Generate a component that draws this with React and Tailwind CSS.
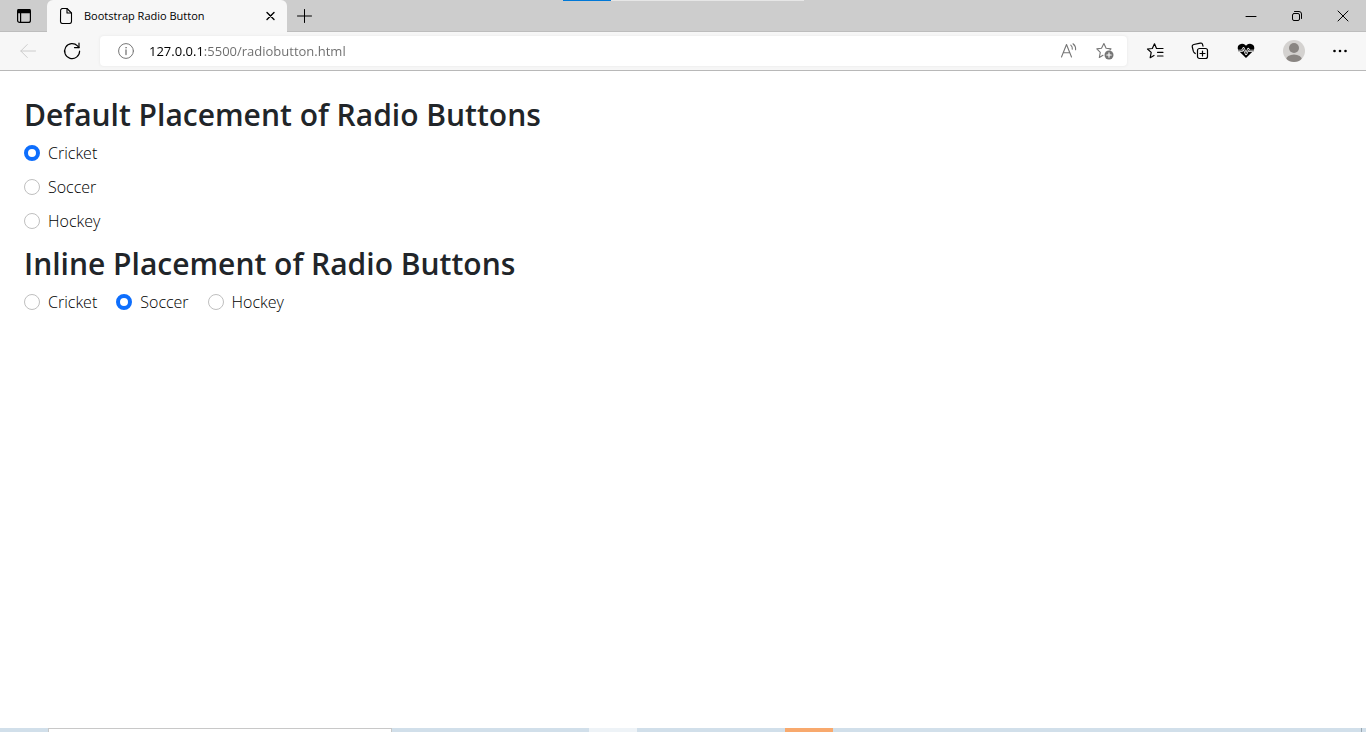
import React from "react";

function Icon({ size = 16, width = 1, className = "", children }) {
  return (
    <svg
      width={size}
      height={size}
      viewBox={`0 0 ${size} ${size}`}
      fill="none"
      stroke="currentColor"
      strokeWidth={width}
      strokeLinecap="round"
      strokeLinejoin="round"
      className={className}
      aria-hidden="true"
    >
      {children}
    </svg>
  );
}

function IconButton({ label, className = "", children, ...rest }) {
  return (
    <button type="button" aria-label={label} className={`flex shrink-0 items-center justify-center ${className}`} {...rest}>
      {children}
    </button>
  );
}

function TabStrip() {
  return (
    <header className="relative flex h-8 items-stretch bg-[#cdcdcd] text-black">
      <div className="absolute top-0 left-[563px] flex h-px w-[241px] bg-[#e6e6e6]">
        <div className="w-12 bg-[#0078d7]" />
      </div>
      <IconButton label="Tab actions" className="w-[47px] border-b border-[#bdbdbd]">
        <Icon size={16} width={1.2}>
          <rect x="1.6" y="1.6" width="12.8" height="12.8" rx="2" />
          <path d="M2 1.6h12v3H2z" fill="currentColor" />
          <path d="M4.6 5v9" />
        </Icon>
      </IconButton>
      <div className="flex w-60 items-center rounded-t-md bg-[#f7f7f7] pr-2 pl-3">
        <Icon size={16} width={1.1} className="shrink-0">
          <path d="M1.6 2.5a2 2 0 0 1 2-2H8l4.5 4.5v8.500a2 2 0 0 1-2 2h-7a2 2 0 0 1-2-2z" />
          <path d="M8 .8V5h4.300" />
        </Icon>
        <span className="ml-[9px] flex-1 truncate text-[11px] leading-4">Bootstrap Radio Button</span>
        <IconButton label="Close tab" className="size-4">
          <Icon size={16} width={1.4}>
            <path d="m4 4.500 7 7m0-7-7 7" />
          </Icon>
        </IconButton>
      </div>
      <div className="flex flex-1 justify-between border-b border-[#bdbdbd]">
        <IconButton label="New tab" className="w-9">
          <Icon size={16}>
            <path d="M7.500 1.500v13m-7-6.500h14" />
          </Icon>
        </IconButton>
        <div className="flex">
          <IconButton label="Minimize" className="w-[46px]">
            <Icon size={12}>
              <path d="M1 6.500h10" />
            </Icon>
          </IconButton>
          <IconButton label="Restore" className="w-[46px]">
            <Icon size={12}>
              <rect x="1.500" y="3.500" width="7" height="7" rx="1.500" />
              <path d="M3.500 1.500H8a2.500 2.500 0 0 1 2.500 2.500v4.500" />
            </Icon>
          </IconButton>
          <IconButton label="Close" className="w-[46px]">
            <Icon size={12}>
              <path d="m1 1 10 10m0-10L1 11" />
            </Icon>
          </IconButton>
        </div>
      </div>
    </header>
  );
}

function Toolbar() {
  return (
    <nav className="flex h-[39px] items-center border-b border-[#b8b8b8] bg-[#f7f7f7] pl-2 text-black">
      <IconButton label="Back" disabled className="h-8 w-10 text-[#cccccc]">
        <Icon size={16}>
          <path d="M15.500 8H.8m6.500-6.500L.8 8l6.500 6.500" />
        </Icon>
      </IconButton>
      <IconButton label="Refresh" className="ml-1 h-8 w-10">
        <Icon size={18} width={1.2}>
          <path d="M16.600 9.200A7.500 7.500 0 1 1 14.500 3.900L16 5.600" />
          <path d="M16 1.200v4.400h-4.500" />
        </Icon>
      </IconButton>
      <div className="ml-2 flex h-[30px] flex-1 items-center rounded-sm bg-white pr-[13px] pl-[18px] shadow-[0_0_3px_#e4e4e4]">
        <IconButton label="Site information" className="size-4 text-[#767676]">
          <Icon size={16}>
            <circle cx="8" cy="8" r="7.400" />
            <path d="M8 7v4.500" strokeWidth="1.300" />
            <circle cx="8" cy="4.700" r=".5" fill="currentColor" strokeWidth=".5" />
          </Icon>
        </IconButton>
        <input
          aria-label="Address"
          defaultValue="127.0.0.1:5500/radiobutton.html"
          className="ml-[15px] min-w-0 flex-1 bg-linear-to-r from-black from-[54px] to-[#6b6b6b] to-[54px] bg-clip-text text-[13px] leading-5 text-transparent caret-black outline-none"
        />
        <IconButton label="Read aloud" className="size-[18px] text-[#767676]">
          <Icon size={18} width={1.1}>
            <path d="M1.500 15 6.500 2.500 11.500 15M3.200 10.800h6.600" />
            <path d="M10.800 3.200c1.200 1 1.700 2.400 1.500 4M13 1.800c1.800 1.400 2.800 3.500 2.600 6" />
          </Icon>
        </IconButton>
        <IconButton label="Add to favorites" className="ml-[18px] size-[18px] text-[#767676]">
          <Icon size={18} width={1.1}>
            <path d="M7 13.300 3.300 15.500l1-5.200L.8 6.900l4.700-.6L7.900 1.500l2.200 4.800 4.900.6-1 1" />
            <circle cx="13" cy="13" r="4.500" fill="currentColor" stroke="none" />
            <path d="M13 10.800v4.400M10.800 13h4.400" stroke="white" />
          </Icon>
        </IconButton>
      </div>
      <div className="flex items-center pl-[5px]">
        <IconButton label="Favorites" className="h-8 w-[46px]">
          <Icon size={18} width={1.2}>
            <path d="M8 13.500 4.200 15.700l1-5.300L1.500 7l4.800-.5L8.500 1.800l2 4.700H17" />
            <path d="M11.500 10.300H17M11.500 14H17" />
          </Icon>
        </IconButton>
        <IconButton label="Collections" className="h-8 w-11">
          <Icon size={18} width={1.2}>
            <rect x="6.500" y="6.500" width="10" height="10" rx="2" />
            <path d="M11.500 9v5M9 11.500h5" />
            <path d="m4.300 11.500-1-.8a3 3 0 0 1-1-1.500L1.300 5a2 2 0 0 1 1.500-2.500l6.400-1.400A2 2 0 0 1 11.600 2.600l.4 1.600" />
          </Icon>
        </IconButton>
        <IconButton label="Performance" className="h-8 w-12">
          <Icon size={18}>
            <path d="M9 16 2.100 9.200A4.200 4.200 0 0 1 8 2.800l1 1 1-1a4.200 4.200 0 0 1 5.900 6.400z" fill="currentColor" stroke="none" />
            <path d="M0 8.800h5l1.500-2.600 2.600 5.800 2.200-5 1 1.800H18" stroke="#f7f7f7" strokeWidth="2.200" />
            <path d="M1.500 8.800H5l1.500-2.600 2.600 5.800 2.200-5 1 1.800h4.200" strokeWidth=".7" />
          </Icon>
        </IconButton>
        <IconButton label="Profile" className="h-8 w-12">
          <svg width="22" height="22" viewBox="0 0 22 22" aria-hidden="true">
            <clipPath id="avatar"><circle cx="11" cy="11" r="11" /></clipPath>
            <g clipPath="url(#avatar)">
              <path d="M0 0h22v22H0z" fill="#d4d2d0" />
              <circle cx="11" cy="8" r="5" fill="#8a8683" />
              <ellipse cx="11" cy="20" rx="8" ry="5.500" fill="#8a8683" />
            </g>
          </svg>
        </IconButton>
        <IconButton label="Settings and more" className="mr-1 h-8 w-11">
          <Icon size={16}>
            <g fill="currentColor" stroke="none">
              <circle cx="2.500" cy="8" r="1.300" />
              <circle cx="8" cy="8" r="1.300" />
              <circle cx="13.500" cy="8" r="1.300" />
            </g>
          </Icon>
        </IconButton>
      </div>
    </nav>
  );
}

function Radio({ name, label, defaultChecked }) {
  return (
    <label className="flex h-6 items-center gap-2 text-base leading-6 font-light text-black">
      <input
        type="radio"
        name={name}
        defaultChecked={defaultChecked}
        className="size-4 shrink-0 appearance-none rounded-full border border-[#bfbfbf] bg-white checked:border-4 checked:border-[#0d6efd]"
      />
      {label}
    </label>
  );
}

function Heading({ children }) {
  return <h1 className="mb-[7px] text-[30px] leading-[38px] font-semibold">{children}</h1>;
}

function Taskbar() {
  return (
    <footer className="flex h-1 bg-[#d1dfea]">
      <div className="ml-12 w-[344px] border border-b-0 border-[#c8c8c8] bg-white" />
      <div className="ml-[197px] w-12 bg-[#eef3f7]" />
      <div className="ml-[148px] w-12 bg-[#f8a96d]" />
      <div className="mr-1 ml-auto w-px bg-[#9ba7b0]" />
    </footer>
  );
}

export default function App() {
  return (
    <div className="flex min-h-screen flex-col bg-white font-['Open_Sans','Noto_Sans',sans-serif] text-[#212529]">
      <TabStrip />
      <Toolbar />
      <main className="flex flex-1 flex-col gap-3 px-6 pt-[25px]">
        <section>
          <Heading>Default Placement of Radio Buttons</Heading>
          <div className="flex flex-col gap-[10px]">
            <Radio name="default" label="Cricket" defaultChecked />
            <Radio name="default" label="Soccer" />
            <Radio name="default" label="Hockey" />
          </div>
        </section>
        <section>
          <Heading>Inline Placement of Radio Buttons</Heading>
          <div className="flex gap-[19px]">
            <Radio name="inline" label="Cricket" />
            <Radio name="inline" label="Soccer" defaultChecked />
            <Radio name="inline" label="Hockey" />
          </div>
        </section>
      </main>
      <Taskbar />
    </div>
  );
}
